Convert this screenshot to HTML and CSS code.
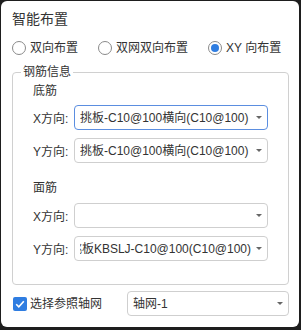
FILE: index.html
```html
<!DOCTYPE html>
<html lang="zh-CN">

<head>
    <meta charset="UTF-8">
    <meta name="viewport" content="width=device-width, initial-scale=1.0">
    <title>智能布置</title>
    <link rel="stylesheet" href="styles.css">
</head>

<body>
    <div class="dialog">
        <div class="title">智能布置</div>

        <div class="radio-row">
            <label class="radio">
                <span class="radio-dot"></span>
                <span>双向布置</span>
            </label>
            <label class="radio">
                <span class="radio-dot"></span>
                <span>双网双向布置</span>
            </label>
            <label class="radio checked">
                <span class="radio-dot"></span>
                <span>XY 向布置</span>
            </label>
        </div>

        <fieldset class="rebar-info">
            <legend>钢筋信息</legend>

            <div class="group">
                <div class="group-title">底筋</div>
                <div class="field">
                    <span class="field-label">X方向:</span>
                    <div class="select focused">
                        <span class="select-text"><span>挑板-C10@100横向(C10@100)</span></span>
                        <span class="arrow"></span>
                    </div>
                </div>
                <div class="field">
                    <span class="field-label">Y方向:</span>
                    <div class="select">
                        <span class="select-text"><span>挑板-C10@100横向(C10@100)</span></span>
                        <span class="arrow"></span>
                    </div>
                </div>

                <div class="group-title top-gap">面筋</div>
                <div class="field">
                    <span class="field-label">X方向:</span>
                    <div class="select">
                        <span class="select-text"></span>
                        <span class="arrow"></span>
                    </div>
                </div>
                <div class="field">
                    <span class="field-label">Y方向:</span>
                    <div class="select">
                        <span class="select-text scrolled"><span>挑板KBSLJ-C10@100(C10@100)</span></span>
                        <span class="arrow"></span>
                    </div>
                </div>
            </div>
        </fieldset>

        <div class="bottom-row">
            <label class="checkbox">
                <svg class="check-box" width="14" height="14" viewBox="0 0 14 14">
                    <rect x="0" y="0" width="14" height="14" rx="2" fill="#2f7de1" />
                    <path d="M3.2 7.2 L5.8 9.8 L10.8 4.2" fill="none" stroke="#fff" stroke-width="1.6" />
                </svg>
                <span>选择参照轴网</span>
            </label>
            <div class="select grid-select">
                <span class="select-text"><span>轴网-1</span></span>
                <span class="arrow"></span>
            </div>
        </div>
    </div>
</body>

</html>
```

FILE: styles.css
```css
* {
    margin: 0;
    padding: 0;
    box-sizing: border-box;
}

body {
    font-family: 'Liberation Sans', 'Noto Sans CJK SC', sans-serif;
    font-size: 12px;
    color: #333;
    background: #1e1e1e;
}

.dialog {
    width: 298px;
    height: 326px;
    margin: 1px 2px 0 1px;
    padding: 0 10px 0 11px;
    background: #fff;
    border-radius: 6px;
}

.title {
    font-size: 14px;
    line-height: 20px;
    padding-top: 8px;
}

.radio-row {
    display: flex;
    align-items: center;
    gap: 20px;
    height: 18px;
    margin-top: 10px;
}

.radio {
    display: flex;
    align-items: center;
    gap: 4px;
    line-height: 18px;
}

.radio-dot {
    width: 14px;
    height: 14px;
    border: 1px solid #8a8a8a;
    border-radius: 50%;
    display: flex;
    align-items: center;
    justify-content: center;
}

.radio.checked .radio-dot::after {
    content: "";
    width: 8px;
    height: 8px;
    border-radius: 50%;
    background: #2f7de1;
}

.rebar-info {
    min-width: 0;
    margin-top: 7px;
    border: 1px solid #d0d0d0;
    border-radius: 4px;
    padding: 3px 20px 23px 8px;
}

.rebar-info legend {
    padding: 0 2px;
    line-height: 16px;
}

.group {
    margin-left: 12px;
}

.group-title {
    line-height: 16px;
}

.group-title.top-gap {
    margin-top: 17px;
}

.field {
    display: flex;
    align-items: center;
    margin-top: 8px;
}

.group-title + .field {
    margin-top: 6px;
}

.top-gap + .field {
    margin-top: 7px;
}

.field-label {
    width: 41px;
    flex-shrink: 0;
}

.select {
    flex: 1;
    min-width: 0;
    height: 25px;
    border: 1px solid #cfcfcf;
    border-radius: 4px;
    display: flex;
    align-items: center;
    padding: 0 5px;
}

.select.focused {
    border-color: #5b8ee0;
}

.select-text {
    flex: 1;
    min-width: 0;
    display: flex;
    overflow: hidden;
    white-space: nowrap;
    line-height: 16px;
}

.select-text.scrolled {
    justify-content: flex-end;
}

.select-text span {
    flex-shrink: 0;
}

.arrow {
    flex-shrink: 0;
    width: 0;
    height: 0;
    margin-left: 5px;
    border-left: 3px solid transparent;
    border-right: 3px solid transparent;
    border-top: 3px solid #666;
}

.bottom-row {
    display: flex;
    align-items: center;
    margin-top: 6px;
}

.checkbox {
    display: flex;
    align-items: center;
    gap: 3px;
    margin-left: 1px;
    line-height: 16px;
}

.check-box {
    display: block;
}

.grid-select {
    flex: 0 0 162px;
    margin-left: auto;
}
```
